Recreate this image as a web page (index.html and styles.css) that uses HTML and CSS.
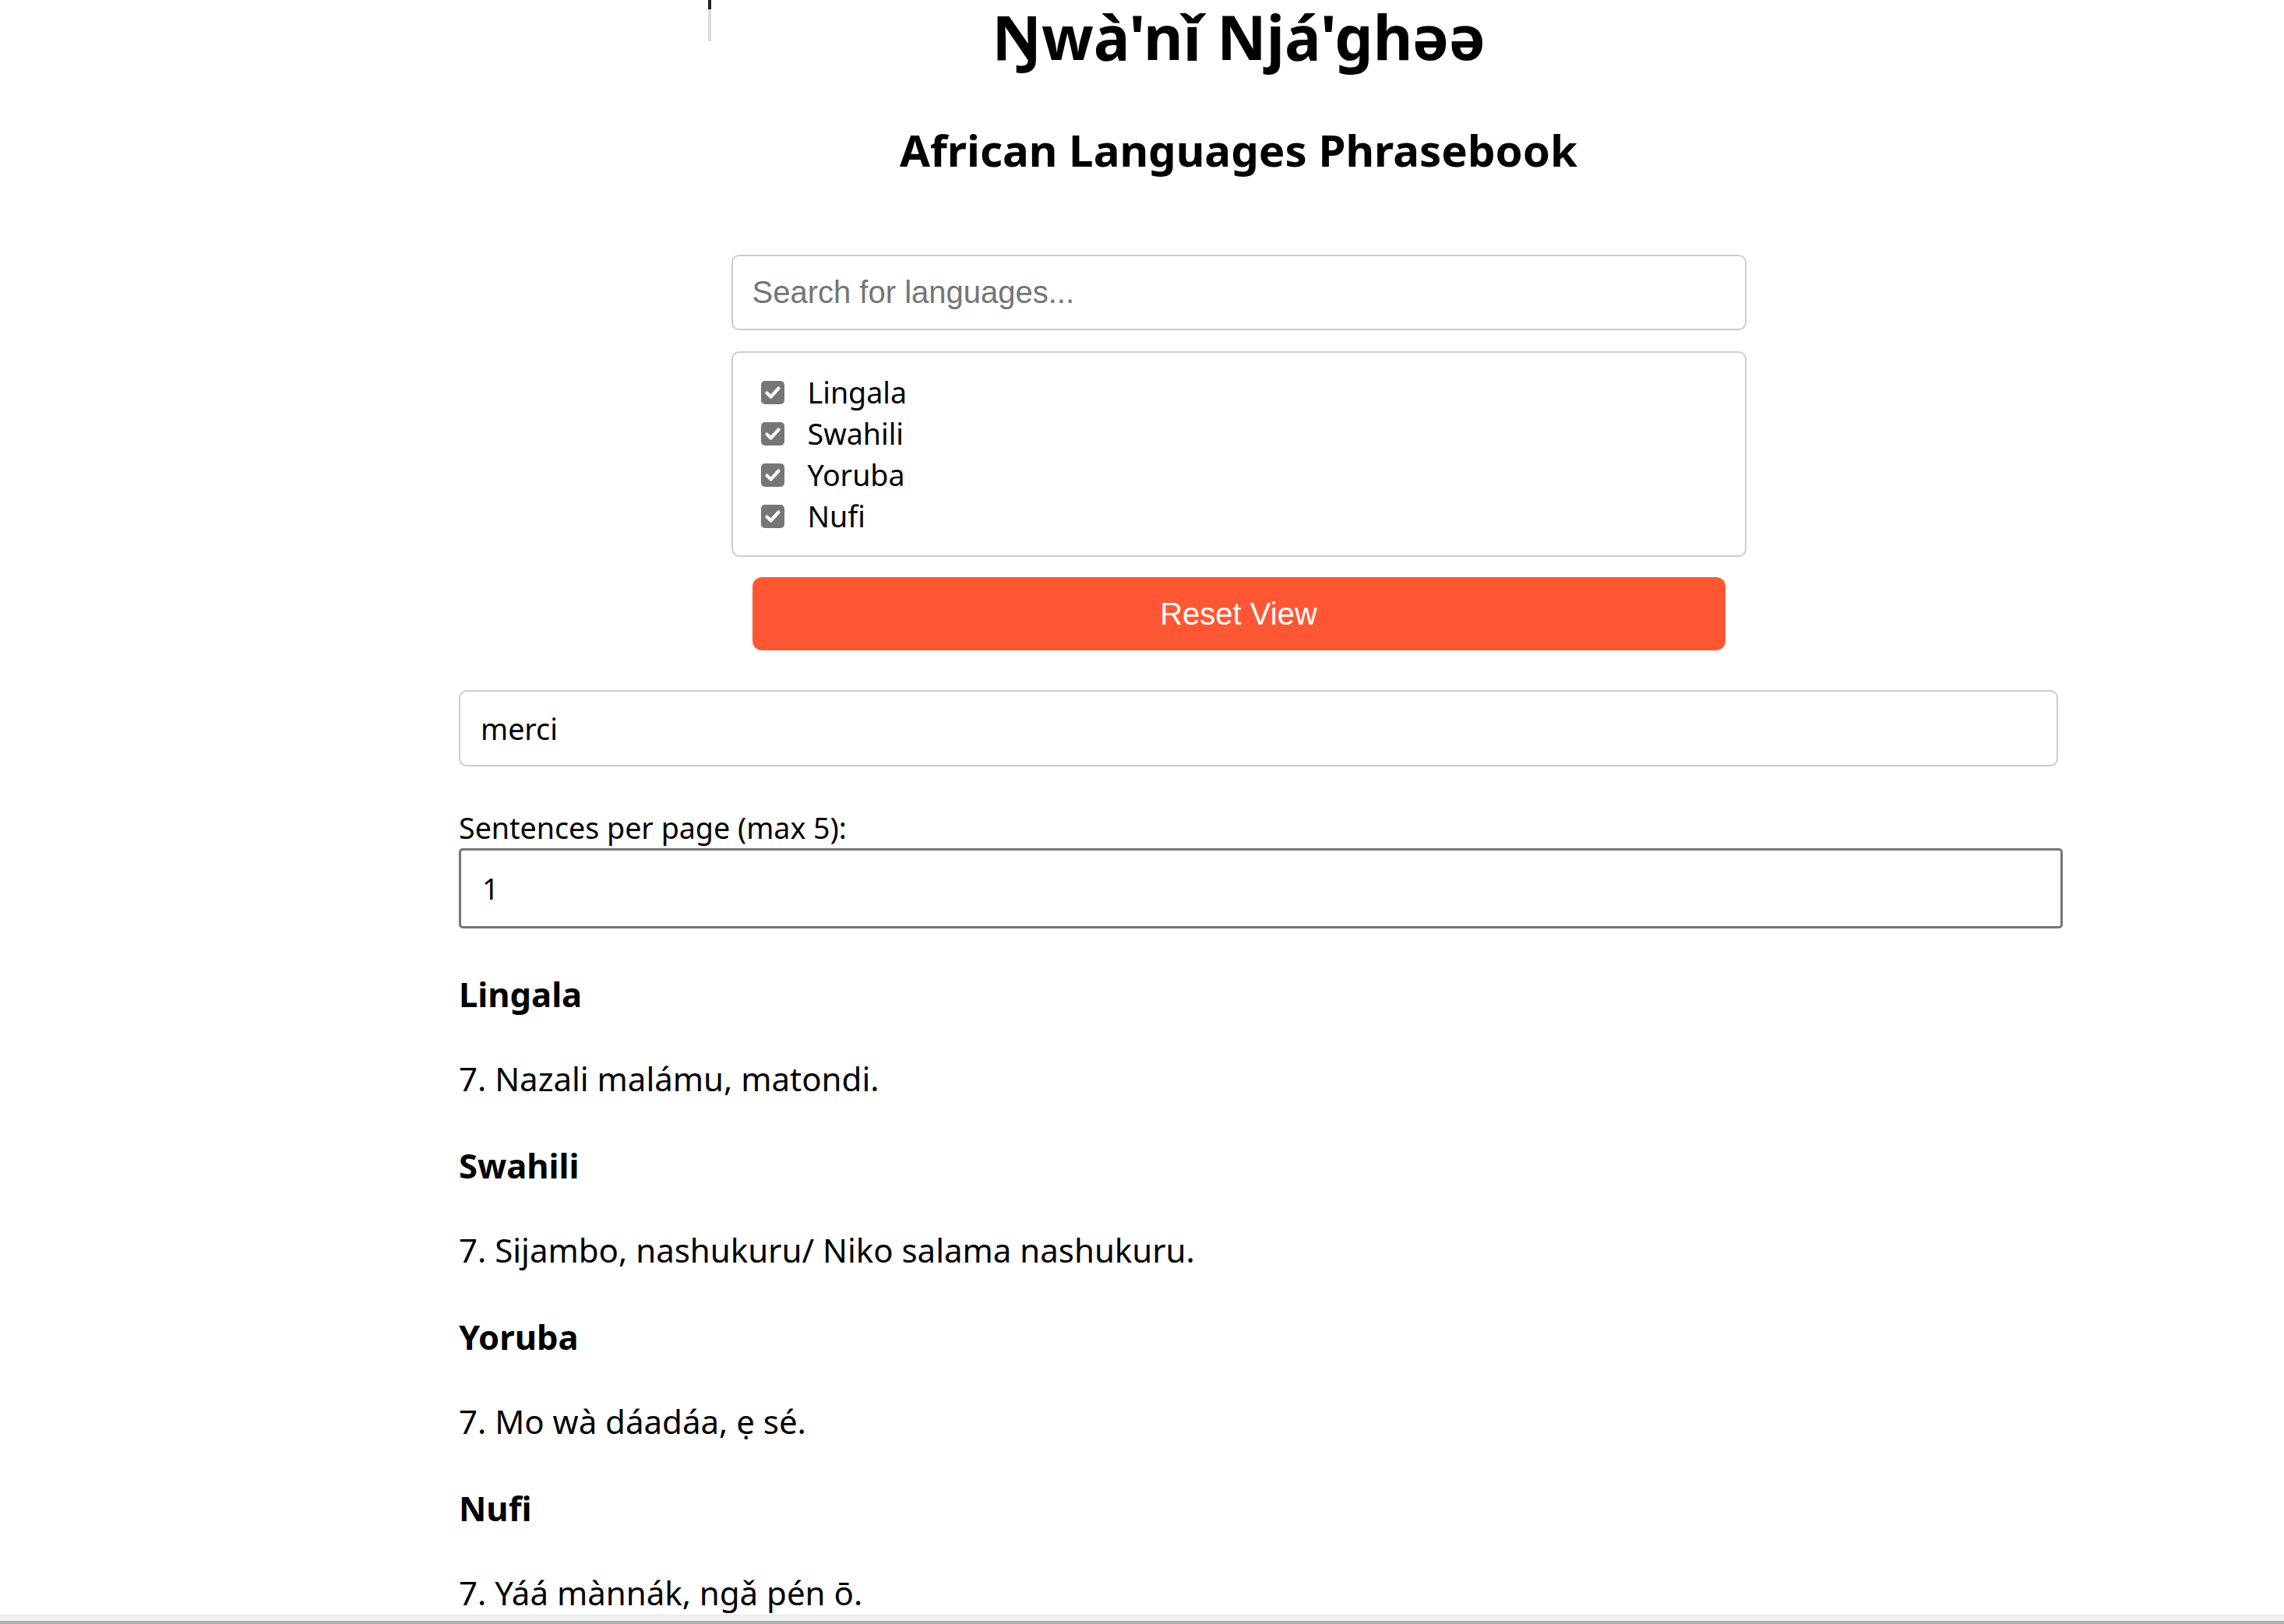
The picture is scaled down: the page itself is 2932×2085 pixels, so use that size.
FILE: index.html
```html
<!DOCTYPE html>
<html lang="en">
<head>
<meta charset="utf-8">
<title>African Languages Phrasebook</title>
<link rel="stylesheet" href="styles.css">
</head>
<body>
<div class="vline"></div>
<header class="top">
  <h1 class="title">Ŋwà'nǐ Njá'ghəə</h1>
  <h2 class="subtitle">African Languages Phrasebook</h2>
  <input class="search" type="text" placeholder="Search for languages...">
  <div class="langs">
    <label class="lang"><span class="cb"><svg viewBox="0 0 30 30" width="30" height="30"><path d="M7.5 15.5 L12.5 20.5 L22.5 9.5" fill="none" stroke="#fff" stroke-width="4.2" stroke-linecap="round" stroke-linejoin="round"/></svg></span>Lingala</label>
    <label class="lang"><span class="cb"><svg viewBox="0 0 30 30" width="30" height="30"><path d="M7.5 15.5 L12.5 20.5 L22.5 9.5" fill="none" stroke="#fff" stroke-width="4.2" stroke-linecap="round" stroke-linejoin="round"/></svg></span>Swahili</label>
    <label class="lang"><span class="cb"><svg viewBox="0 0 30 30" width="30" height="30"><path d="M7.5 15.5 L12.5 20.5 L22.5 9.5" fill="none" stroke="#fff" stroke-width="4.2" stroke-linecap="round" stroke-linejoin="round"/></svg></span>Yoruba</label>
    <label class="lang"><span class="cb"><svg viewBox="0 0 30 30" width="30" height="30"><path d="M7.5 15.5 L12.5 20.5 L22.5 9.5" fill="none" stroke="#fff" stroke-width="4.2" stroke-linecap="round" stroke-linejoin="round"/></svg></span>Nufi</label>
  </div>
  <button class="reset" type="button">Reset View</button>
</header>
<main class="results">
  <input class="query" type="text" value="merci">
  <label class="per-page" for="per-page">Sentences per page (max 5):</label>
  <input class="num" id="per-page" type="text" value="1">
  <div class="phrases">
    <h3 class="lang-name">Lingala</h3>
    <p class="phrase">7. Nazali malámu, matondi.</p>
    <h3 class="lang-name">Swahili</h3>
    <p class="phrase">7. Sijambo, nashukuru/ Niko salama nashukuru.</p>
    <h3 class="lang-name">Yoruba</h3>
    <p class="phrase">7. Mo wà dáadáa, ẹ sé.</p>
    <h3 class="lang-name">Nufi</h3>
    <p class="phrase">7. Yáá mànnák, ngǎ pén ō.</p>
  </div>
</main>
<div class="hscroll"><div class="thumb"></div></div>
</body>
</html>
```
FILE: styles.css
```css
* { box-sizing: border-box; }
html, body { margin: 0; padding: 0; }
body {
  width: 2932px;
  height: 2085px;
  overflow: hidden;
  background: #fff;
  color: #000;
  font-family: "Noto Sans", "Open Sans", sans-serif;
  font-size: 37.6px;
  line-height: 53px;
  position: relative;
}
.vline {
  position: absolute;
  left: 909px;
  top: 0;
  width: 4px;
  height: 53px;
  background: linear-gradient(#222 0, #222 12px, #dcdcdc 12px, #dcdcdc 100%);
}
.top {
  padding-left: 248px;
  display: flex;
  flex-direction: column;
  align-items: center;
}
.title {
  margin: 7px 0 0;
  font-size: 78px;
  line-height: 80px;
  font-weight: 700;
}
.subtitle {
  margin: 76px 0 0;
  font-size: 56.4px;
  line-height: 60px;
  font-weight: 700;
}
.search {
  margin-top: 104px;
  width: 1303px;
  height: 97px;
  border: 2px solid #ccc;
  border-radius: 10px;
  padding: 0 25px;
  font-family: "Liberation Sans", Arial, sans-serif;
  font-size: 40px;
  color: #000;
  outline: none;
}
.search::placeholder { color: #757575; }
.langs {
  margin-top: 27px;
  width: 1303px;
  border: 2px solid #ccc;
  border-radius: 10px;
  padding: 24px 25px 24px 36px;
  display: flex;
  flex-direction: column;
}
.lang {
  display: flex;
  align-items: center;
  gap: 30px;
  height: 53px;
  line-height: 53px;
}
.cb {
  width: 30px;
  height: 30px;
  border-radius: 5px;
  background: #767676;
  display: flex;
}
.reset {
  margin-top: 26px;
  width: 1249px;
  height: 94px;
  border: none;
  border-radius: 12px;
  background: #ff5733;
  color: #fff;
  font-family: "Liberation Sans", Arial, sans-serif;
  font-size: 40px;
  padding: 0;
}
.results {
  margin-left: 589px;
  width: 2059px;
  display: flex;
  flex-direction: column;
  align-items: flex-start;
}
.query {
  margin-top: 51px;
  width: 2053px;
  height: 98px;
  border: 2px solid #ccc;
  border-radius: 10px;
  padding: 0 26px;
  font-family: inherit;
  font-size: 37.6px;
  color: #000;
  outline: none;
}
.per-page {
  display: block;
  margin-top: 53px;
  line-height: 52px;
}
.num {
  width: 2059px;
  height: 103px;
  border: 3px solid #767676;
  border-radius: 5px;
  padding: 0 27px;
  font-family: inherit;
  font-size: 37.6px;
  color: #000;
  outline: none;
}
.phrases {
  margin-top: 53px;
  display: flex;
  flex-direction: column;
}
.lang-name {
  margin: 0 0 51px;
  font-size: 43.5px;
  line-height: 62px;
  font-weight: 700;
}
.phrase {
  margin: 0 0 54px;
  font-size: 42px;
  line-height: 53px;
}
.hscroll {
  position: absolute;
  left: 0;
  bottom: 0;
  width: 2932px;
  height: 12px;
  background: #f1f1f1;
  border-top: 1px solid #e4e4e4;
}
.thumb {
  position: absolute;
  left: 0;
  right: 0;
  bottom: 0;
  height: 4px;
  background: #a9b5b5;
}
```
